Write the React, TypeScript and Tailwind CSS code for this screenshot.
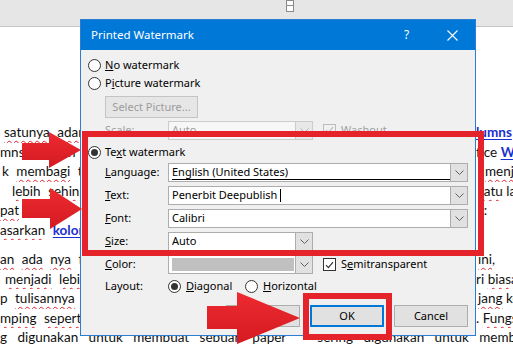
import type { ReactNode } from "react";

const sq = "underline decoration-wavy decoration-[#e0202a] decoration-1 underline-offset-[3px]";
const link = "font-bold text-[#1a2fd0] underline underline-offset-2";

function DocRow({ left, right, className = "" }: { left: ReactNode; right?: ReactNode; className?: string }) {
  return (
    <div className={`grid h-[19.5px] grid-cols-[476px_1fr] leading-[19.5px] whitespace-nowrap ${className}`}>
      <div className="overflow-hidden [word-spacing:4px]">{left}</div>
      <div className="overflow-hidden">{right}</div>
    </div>
  );
}

function Radio({ checked = false }: { checked?: boolean }) {
  return (
    <span className="flex h-[13px] w-[13px] shrink-0 items-center justify-center rounded-full border border-[#333] bg-white">
      {checked && <span className="h-[7px] w-[7px] rounded-full bg-[#333]" />}
    </span>
  );
}

function Check({ disabled = false }: { disabled?: boolean }) {
  return (
    <span
      className={`flex h-[13px] w-[13px] shrink-0 items-center justify-center border ${
        disabled ? "border-[#bcbcbc] bg-[#f0f0f0]" : "border-[#333] bg-white"
      }`}
    >
      <svg width="9" height="8" viewBox="0 0 9 8">
        <path d="M1 4.2 L3.4 6.6 L8 1.2" fill="none" stroke={disabled ? "#bcbcbc" : "#333"} strokeWidth="1.2" />
      </svg>
    </span>
  );
}

function Chevron({ color = "#606060" }: { color?: string }) {
  return (
    <svg width="9" height="5" viewBox="0 0 9 5">
      <path d="M0.5 0.5 L4.5 4.5 L8.5 0.5" fill="none" stroke={color} strokeWidth="1" />
    </svg>
  );
}

function Combo({ className, children, disabled = false }: { className: string; children?: ReactNode; disabled?: boolean }) {
  return (
    <div
      className={`flex h-[19px] items-stretch border ${
        disabled ? "border-[#cccccc] bg-[#f7f7f7] text-[#a0a0a0]" : "border-[#adadad] bg-white"
      } ${className}`}
    >
      <div className="flex flex-1 items-center overflow-hidden pl-[3px]">{children}</div>
      <div
        className={`m-[-1px] flex w-[18px] items-center justify-center border ${
          disabled ? "border-[#cccccc] bg-[#e8e8e8]" : "border-[#adadad] bg-[#e1e1e1]"
        }`}
      >
        <Chevron color={disabled ? "#b0b0b0" : "#606060"} />
      </div>
    </div>
  );
}

function Label({ children }: { children: ReactNode }) {
  return <span className="w-[63px] shrink-0">{children}</span>;
}

function Button({ children, focused = false }: { children: ReactNode; focused?: boolean }) {
  return (
    <button
      className={`flex h-[22px] w-[74px] items-center justify-center bg-[#e1e1e1] ${
        focused ? "border-2 border-[#0078d7]" : "border border-[#adadad]"
      }`}
    >
      {children}
    </button>
  );
}

function Dialog() {
  return (
    <div className="absolute left-[80px] top-[19px] h-[317px] w-[396px] border border-[#2b7cd3] bg-[#f0f0f0] font-['Noto_Sans',sans-serif] text-[11px] text-black">
      <div className="flex h-[30px] items-center bg-[#0078d7] pl-[10px] text-white">
        <span className="flex-1 text-[11.5px]">Printed Watermark</span>
        <span className="w-[43px] text-[12px]">?</span>
        <svg className="mr-[17px]" width="11" height="11" viewBox="0 0 11 11">
          <path d="M0.5 0.5 L10.5 10.5 M10.5 0.5 L0.5 10.5" stroke="white" strokeWidth="1.1" />
        </svg>
      </div>

      <div className="flex flex-col pl-[7px] pr-[6px]">
        <div className="mt-[6px] flex h-[18px] items-center gap-[4px]">
          <Radio />
          <span>
            <u>N</u>o watermark
          </span>
        </div>
        <div className="flex h-[18px] items-center gap-[4px]">
          <Radio />
          <span>
            P<u>i</u>cture watermark
          </span>
        </div>
        <div className="ml-[17px] mt-[4px] flex h-[22px] w-[93px] items-center justify-center border border-[#c4c4c4] bg-[#e6e6e6] text-[#9c9c9c]">
          Select Picture...
        </div>
        <div className="ml-[17px] mt-[3px] flex h-[18px] items-center text-[#a0a0a0]">
          <Label>Scale:</Label>
          <Combo className="h-[18px] w-[145px]" disabled>
            Auto
          </Combo>
          <span className="ml-[10px] flex items-center gap-[5px]">
            <Check disabled />
            Washout
          </span>
        </div>

        <div className="mt-[4px] flex h-[18px] items-center gap-[4px]">
          <Radio checked />
          <span>
            Te<u>x</u>t watermark
          </span>
        </div>
        <div className="ml-[17px] mt-[2px] flex items-center">
          <Label>
            <u>L</u>anguage:
          </Label>
          <Combo className="w-[300px]">
            <span className="mr-[1px] mt-[2px] h-[16px] flex-1 border-b-[3px] border-double border-black leading-[12px]">
              English (United States)
            </span>
          </Combo>
        </div>
        <div className="ml-[17px] mt-[4px] flex items-center">
          <Label>
            <u>T</u>ext:
          </Label>
          <Combo className="w-[300px]">
            Penerbit Deepublish
            <span className="ml-[3px] h-[13px] w-px bg-black" />
          </Combo>
        </div>
        <div className="ml-[17px] mt-[4px] flex items-center">
          <Label>
            <u>F</u>ont:
          </Label>
          <Combo className="w-[300px]">Calibri</Combo>
        </div>
        <div className="ml-[17px] mt-[4px] flex items-center">
          <Label>
            <u>S</u>ize:
          </Label>
          <Combo className="w-[145px]">Auto</Combo>
        </div>
        <div className="ml-[17px] mt-[4px] flex items-center">
          <Label>
            <u>C</u>olor:
          </Label>
          <Combo className="w-[145px]">
            <span className="mr-[2px] h-[13px] flex-1 bg-[#c0c0c0]" />
          </Combo>
          <span className="ml-[10px] flex items-center gap-[5px]">
            <Check />
            <span>
              S<u>e</u>mitransparent
            </span>
          </span>
        </div>
        <div className="ml-[17px] mt-[3px] flex h-[18px] items-center">
          <Label>Layout:</Label>
          <Radio checked />
          <span className="ml-[5px] w-[59px]">
            <u>D</u>iagonal
          </span>
          <Radio />
          <span className="ml-[5px]">
            <u>H</u>orizontal
          </span>
        </div>

        <div className="mt-[10px] flex justify-end gap-[10px] pr-[1px]">
          <Button>Apply</Button>
          <Button focused>OK</Button>
          <Button>Cancel</Button>
        </div>
      </div>
    </div>
  );
}

function Arrow({ className, width, height, points }: { className: string; width: number; height: number; points: string }) {
  return (
    <svg className={`absolute ${className}`} width={width} height={height} viewBox={`0 0 ${width} ${height}`}>
      <defs>
        <linearGradient id="red" x1="0" y1="0" x2="0" y2="1">
          <stop offset="0" stopColor="#ee2a30" />
          <stop offset="1" stopColor="#d41a22" />
        </linearGradient>
      </defs>
      <polygon points={points} fill="url(#red)" />
    </svg>
  );
}

export default function App() {
  return (
    <div className="relative h-[344px] w-[513px] overflow-hidden bg-white font-['Lato',sans-serif] text-[13.5px] text-[#111]">
      <div className="h-[27px] border-b border-[#c6c6c6] bg-[#e6e6e6] pl-[286px]">
        <div className="flex h-[12px] w-[8px] flex-col border border-[#8a8a8a] bg-white">
          <div className="h-[5px] border-b border-[#8a8a8a]" />
        </div>
      </div>

      <div className="pt-[96px]">
        <DocRow
          left={
            <span className="pl-[4px]">
              <span className={sq}>satunya</span> <span className={sq}>adanya</span>
            </span>
          }
          right={<span className={link}>lumns</span>}
        />
        <DocRow left={<span>mns dengan tujuan v</span>} right={<span>fice <span className={link}>Word</span></span>} />
        <DocRow
          left={
            <span className="pl-[2px]">
              k <span className={sq}>membagi</span> teks
            </span>
          }
          right={
            <span className="pl-[9px]">
              <span className={sq}>menjadi</span>
            </span>
          }
        />
        <DocRow
          left={
            <span className="pl-[12px]">
              <span className={sq}>lebih</span> <span className={sq}>sehingga</span>
            </span>
          }
          right={
            <span className="pl-[2px]">
              <span className={sq}>satu</span> lagi
            </span>
          }
        />
        <DocRow
          left={
            <span>
              <span className={sq}>pat</span> dibaca
            </span>
          }
          right={<span className="pl-[2px]">s:</span>}
        />
        <DocRow
          left={
            <span>
              <span className={sq}>asarkan</span> <span className={link}>kolom</span>
            </span>
          }
        />
        <DocRow
          className="mt-[10px]"
          left={
            <span>
              <span className={sq}>an</span> <span className={sq}>ada</span> <span className={sq}>nya</span> fitur
            </span>
          }
          right={
            <span className="pl-[2px]">
              <span className={sq}>ini</span>,
            </span>
          }
        />
        <DocRow
          left={
            <span className="pl-[5px]">
              <span className={sq}>menjadi</span> <span className={sq}>lebih</span>
            </span>
          }
          right={
            <span>
              ri <span className={sq}>biasanya</span>
            </span>
          }
        />
        <DocRow
          left={
            <span>
              p <span className={sq}>tulisannya</span> akan
            </span>
          }
          right={
            <span className="pl-[2px]">
              <span className={sq}>jang</span> ke
            </span>
          }
        />
        <DocRow
          left={
            <span>
              <span className={sq}>mping</span> <span className={sq}>seperti</span>
            </span>
          }
          right={
            <span>
              . <span className={sq}>Fungsi</span>
            </span>
          }
        />
        <div className="h-[19.5px] whitespace-nowrap leading-[19.5px] [word-spacing:7px]">
          g digunakan untuk membuat sebuah paper &nbsp; sering digunakan untuk membuat sebuah
        </div>
      </div>

      <Dialog />

      <div className="absolute left-[82px] top-[131px] h-[125px] w-[402px] border-[6px] border-[#e5232b]" />
      <div className="absolute left-[303px] top-[293px] h-[47px] w-[89px] border-[6px] border-[#e5232b]" />

      <Arrow className="left-[22px] top-[132px]" width={60} height={37} points="0,11 27,11 27,0 59,18 27,36 27,28 0,28" />
      <Arrow className="left-[22px] top-[188px]" width={61} height={42} points="0,11 28,11 28,0 60,21 28,41 28,30 0,30" />
      <Arrow className="left-[207px] top-[292px]" width={94} height={52} points="0,14 30,14 30,0 93,26 30,52 30,37 0,37" />
    </div>
  );
}
